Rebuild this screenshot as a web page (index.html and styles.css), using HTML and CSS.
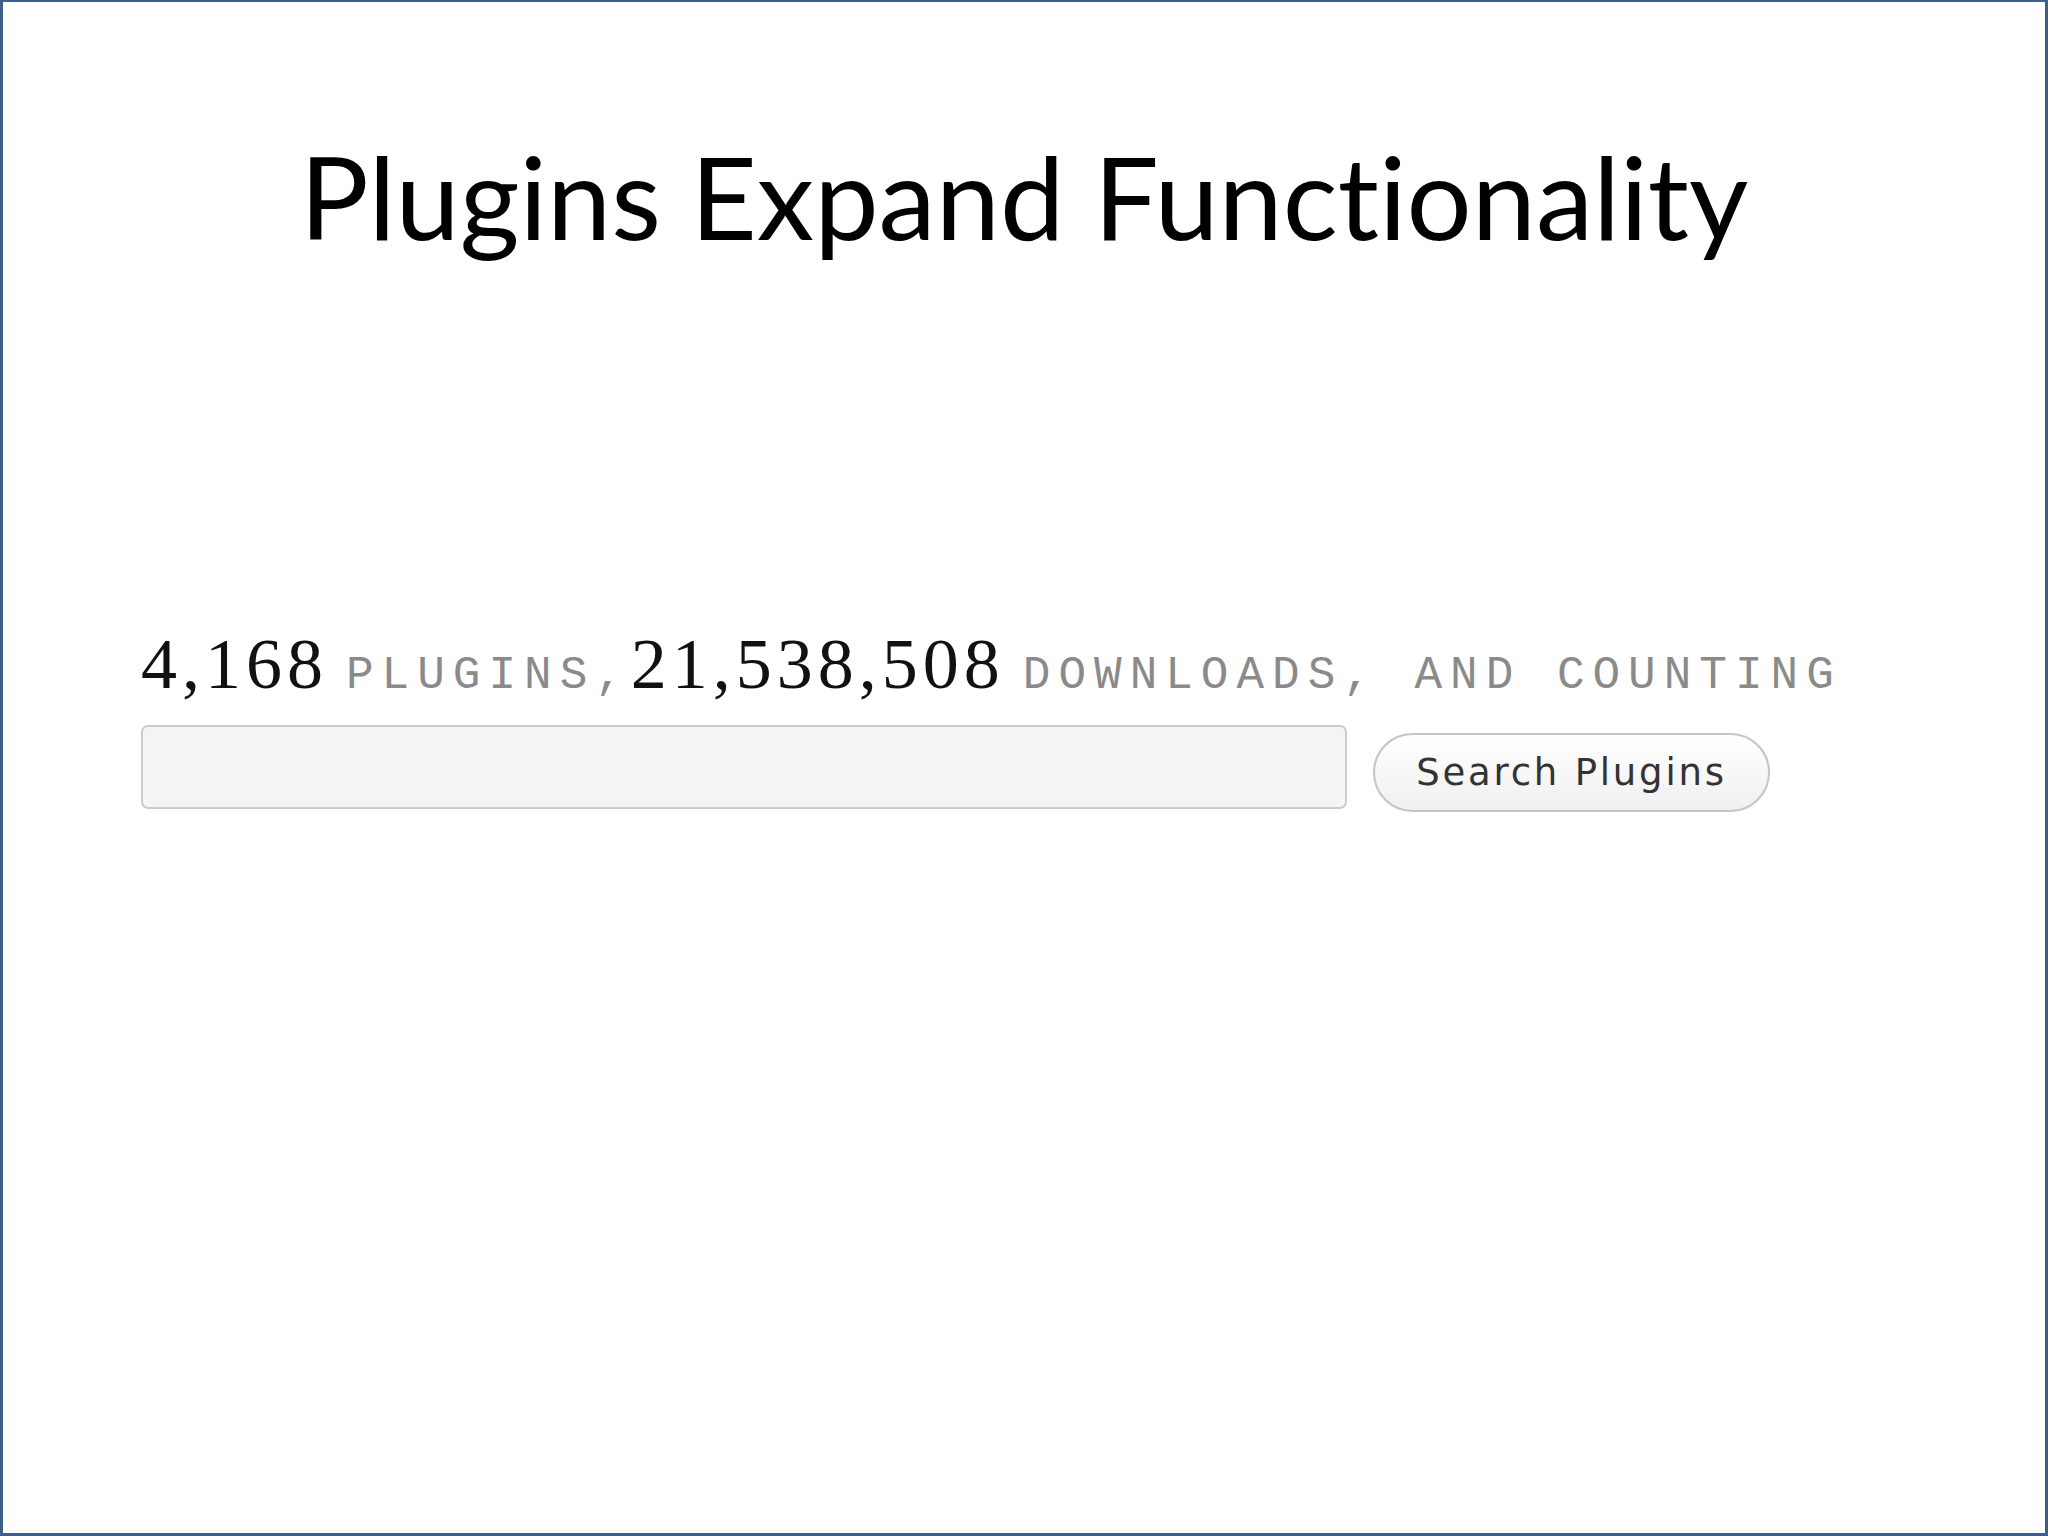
FILE: index.html
```html
<!DOCTYPE html>
<html>
<head>
<meta charset="utf-8">
<link rel="stylesheet" href="styles.css">
</head>
<body>
<div class="slide">
  <h1 class="title">Plugins Expand Functionality</h1>
  <div class="plugins">
    <p class="stats"><span class="num">4,168</span> <span class="label label-mid">PLUGINS,</span> <span class="num">21,538,508</span> <span class="label">DOWNLOADS, AND COUNTING</span></p>
    <div class="search-row">
      <div class="search-input"></div>
      <div class="search-btn">Search Plugins</div>
    </div>
  </div>
</div>
</body>
</html>
```
FILE: styles.css
```css
html, body {
  margin: 0;
  padding: 0;
  background: #ffffff;
}
.slide {
  box-sizing: border-box;
  width: 2048px;
  height: 1536px;
  border: 3px solid #3e5f8a;
  border-top-width: 2px;
  background: #ffffff;
  display: flex;
  flex-direction: column;
}
.title {
  margin: 0;
  padding-top: 128px;
  text-align: center;
  font-family: Lato, "Open Sans", sans-serif;
  font-weight: 400;
  font-size: 115px;
  line-height: 130px;
  font-variant-ligatures: none;
  color: #000000;
}
.plugins {
  padding-left: 138px;
  padding-top: 364px;
}
.stats {
  margin: 0;
  font-family: "Liberation Serif", serif;
  font-size: 72px;
  line-height: 80px;
  letter-spacing: 5px;
  word-spacing: -5px;
  white-space: nowrap;
  color: #111111;
}
.num {
  color: #111111;
}
.label {
  font-family: "Liberation Mono", monospace;
  font-size: 46px;
  line-height: 46px;
  color: #8a8a8a;
  letter-spacing: 8px;
  word-spacing: 0;
}
.label-mid {
  margin-right: -18px;
}
.search-row {
  display: flex;
  align-items: flex-start;
  gap: 26px;
  margin-top: 21px;
}
.search-input {
  box-sizing: border-box;
  width: 1206px;
  height: 84px;
  background: #f4f4f4;
  border: 2px solid #cccccc;
  border-radius: 7px;
}
.search-btn {
  box-sizing: border-box;
  width: 397px;
  height: 79px;
  margin-top: 8px;
  border: 2px solid #c4c4c4;
  border-radius: 40px;
  background: linear-gradient(#ffffff, #f0f0f0);
  display: flex;
  align-items: center;
  justify-content: center;
  font-family: "DejaVu Sans", Verdana, sans-serif;
  font-size: 37px;
  letter-spacing: 2.8px;
  word-spacing: 0;
  color: #333333;
}
```
